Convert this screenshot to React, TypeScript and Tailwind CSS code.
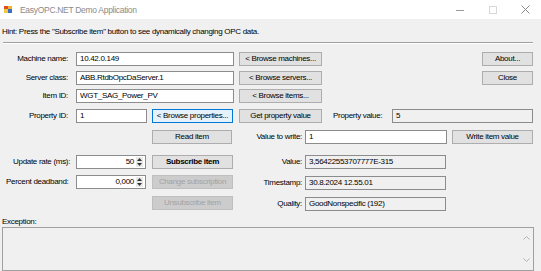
import React from "react";

const F = "font-['Liberation_Sans',Arial,sans-serif] tracking-[-0.3px]";

function Tb({ w, value, ro }: { w: string; value: string; ro?: boolean }) {
  return (
    <div
      className={`${w} h-[14px] shrink-0 border border-[#8c8c8c] ${ro ? "bg-[#f0f0f0]" : "bg-white"} flex items-center pl-[3px] text-[8px] leading-[12px] text-black whitespace-nowrap overflow-hidden`}
    >
      {value}
    </div>
  );
}

function Btn({
  w,
  children,
  bold,
  disabled,
  focused,
}: {
  w: string;
  children: React.ReactNode;
  bold?: boolean;
  disabled?: boolean;
  focused?: boolean;
}) {
  const cls = disabled
    ? "bg-[#cccccc] border-[#bfbfbf] text-[#a3a3a3]"
    : focused
    ? "bg-[#e5f1fb] border-[#0078d7] text-black"
    : "bg-[#e1e1e1] border-[#adadad] text-black";
  return (
    <div
      className={`${w} h-[14px] shrink-0 border ${cls} flex items-center justify-center text-[8px] leading-[12px] whitespace-nowrap ${bold ? "font-bold" : ""}`}
    >
      {children}
    </div>
  );
}

function Lbl({ w, children, right }: { w: string; children: React.ReactNode; right?: boolean }) {
  return (
    <div className={`${w} shrink-0 text-[8px] leading-[12px] text-black whitespace-nowrap ${right ? "text-right" : ""}`}>
      {children}
    </div>
  );
}

function Spin({ value }: { value: string }) {
  return (
    <div className="w-[70px] h-[14px] shrink-0 border border-[#8c8c8c] bg-white flex items-stretch">
      <div className="flex-1 text-right pr-[2px] text-[8px] leading-[12px] text-black">{value}</div>
      <div className="w-[7px] my-[1px] mr-[2px] bg-[#e8e8e8] flex flex-col justify-between items-center py-[1px]">
        <svg width="5" height="3" viewBox="0 0 5 3">
          <path d="M0 3 L2.5 0 L5 3 Z" fill="#333" />
        </svg>
        <svg width="5" height="3" viewBox="0 0 5 3">
          <path d="M0 0 L2.5 3 L5 0 Z" fill="#333" />
        </svg>
      </div>
    </div>
  );
}

export default function App() {
  return (
    <div className={`w-[541px] h-[271px] bg-[#f0f0f0] flex flex-col overflow-hidden ${F}`}>
      {/* Title bar */}
      <div className="h-[19px] bg-white flex items-center shrink-0">
        <svg className="ml-[4px]" width="8" height="7" viewBox="0 0 8 7">
          <rect x="0" y="0" width="4" height="3" fill="#e04a2a" />
          <rect x="4" y="0" width="4" height="3" fill="#f2b233" />
          <rect x="0" y="3" width="4" height="4" fill="#f5c842" />
          <rect x="4" y="3" width="4" height="4" fill="#3b6fc4" />
        </svg>
        <div className="ml-[8px] text-[8.5px] text-[#8a8a8a] leading-[12px]">EasyOPC.NET Demo Application</div>
        <div className="ml-auto flex items-center">
          <svg width="8" height="8" viewBox="0 0 8 8" className="mr-[25px]">
            <line x1="0" y1="4.5" x2="8" y2="4.5" stroke="#9a9a9a" strokeWidth="1" />
          </svg>
          <svg width="8" height="8" viewBox="0 0 8 8" className="mr-[24px]">
            <rect x="0.5" y="0.5" width="7" height="7" fill="none" stroke="#d8d8d8" strokeWidth="1" />
          </svg>
          <svg width="9" height="9" viewBox="0 0 9 9" className="mr-[11px]">
            <path d="M0.5 0.5 L8.5 8.5 M8.5 0.5 L0.5 8.5" stroke="#8a8a8a" strokeWidth="1" />
          </svg>
        </div>
      </div>

      {/* Hint */}
      <div className="mt-[7px] ml-[2px] h-[12px] text-[8px] leading-[12px] text-black whitespace-nowrap">
        Hint: Press the "Subscribe item" button to see dynamically changing OPC data.
      </div>
      <div className="mt-[4px] ml-[3px] w-[530px] h-[2px] border-t border-[#a0a0a0] border-b border-b-white" />

      {/* Row 1 */}
      <div className="mt-[8px] h-[14px] flex items-center">
        <Lbl w="w-[68px]" right>Machine name:</Lbl>
        <div className="ml-[8px]"><Tb w="w-[158px]" value="10.42.0.149" /></div>
        <div className="ml-[5px]"><Btn w="w-[83px]">&lt; Browse machines...</Btn></div>
        <div className="ml-auto mr-[8px]"><Btn w="w-[51px]">About...</Btn></div>
      </div>

      {/* Row 2 */}
      <div className="mt-[5px] h-[14px] flex items-center">
        <Lbl w="w-[68px]" right>Server class:</Lbl>
        <div className="ml-[8px]"><Tb w="w-[158px]" value="ABB.RtdbOpcDaServer.1" /></div>
        <div className="ml-[5px]"><Btn w="w-[83px]">&lt; Browse servers...</Btn></div>
        <div className="ml-auto mr-[8px]"><Btn w="w-[51px]">Close</Btn></div>
      </div>

      {/* Row 3 */}
      <div className="mt-[4px] h-[14px] flex items-center">
        <Lbl w="w-[68px]" right>Item ID:</Lbl>
        <div className="ml-[8px]"><Tb w="w-[158px]" value="WGT_SAG_Power_PV" /></div>
        <div className="ml-[5px]"><Btn w="w-[83px]">&lt; Browse items...</Btn></div>
      </div>

      {/* Row 4 */}
      <div className="mt-[6px] h-[14px] flex items-center">
        <Lbl w="w-[68px]" right>Property ID:</Lbl>
        <div className="ml-[8px]"><Tb w="w-[71px]" value="1" /></div>
        <div className="ml-[5px]"><Btn w="w-[81px]" focused>&lt; Browse properties...</Btn></div>
        <div className="ml-[6px]"><Btn w="w-[83px]">Get property value</Btn></div>
        <div className="ml-[11px]"><Lbl w="w-[56px]">Property value:</Lbl></div>
        <div className="ml-auto mr-[8px]"><Tb w="w-[141px]" value="5" ro /></div>
      </div>

      {/* Row 5 */}
      <div className="mt-[7px] h-[14px] flex items-center">
        <div className="ml-[152px]"><Btn w="w-[80px]">Read item</Btn></div>
        <Lbl w="w-[70px]" right>Value to write:</Lbl>
        <div className="ml-[3px]"><Tb w="w-[142px]" value="1" /></div>
        <div className="ml-auto mr-[8px]"><Btn w="w-[81px]">Write item value</Btn></div>
      </div>

      {/* Rows 6-8 */}
      <div className="mt-[11px] flex">
        <div className="w-[234px] flex flex-col">
          <div className="h-[14px] flex items-center">
            <div className="ml-[13px]"><Lbl w="w-[63px]">Update rate (ms):</Lbl></div>
            <Spin value="50" />
            <div className="ml-[6px]"><Btn w="w-[81px]" bold>Subscribe item</Btn></div>
          </div>
          <div className="mt-[6px] h-[14px] flex items-center">
            <div className="ml-[6px]"><Lbl w="w-[70px]">Percent deadband:</Lbl></div>
            <Spin value="0,000" />
            <div className="ml-[6px]"><Btn w="w-[81px]" disabled>Change subscription</Btn></div>
          </div>
          <div className="mt-[7px] h-[14px] flex items-center">
            <div className="ml-[152px]"><Btn w="w-[81px]" disabled>Unsubscribe item</Btn></div>
          </div>
        </div>
        <div className="flex flex-col">
          <div className="h-[14px] flex items-center">
            <Lbl w="w-[68px]" right>Value:</Lbl>
            <div className="ml-[3px]"><Tb w="w-[141px]" value="3,56422553707777E-315" ro /></div>
          </div>
          <div className="mt-[7px] h-[14px] flex items-center">
            <Lbl w="w-[68px]" right>Timestamp:</Lbl>
            <div className="ml-[3px]"><Tb w="w-[141px]" value="30.8.2024 12.55.01" ro /></div>
          </div>
          <div className="mt-[7px] h-[14px] flex items-center">
            <Lbl w="w-[68px]" right>Quality:</Lbl>
            <div className="ml-[3px]"><Tb w="w-[141px]" value="GoodNonspecific (192)" ro /></div>
          </div>
        </div>
      </div>

      {/* Exception */}
      <div className="mt-[5px] ml-[2px] h-[11px] text-[8px] leading-[11px] text-black">Exception:</div>
      <div className="ml-[2px] w-[532px] h-[44px] border border-[#a0a0a0] bg-[#f0f0f0] flex justify-end">
        <div className="w-[12px] flex flex-col items-center justify-between py-[8px] pr-[2px]">
          <svg width="7" height="4" viewBox="0 0 7 4">
            <path d="M0.5 3.5 L3.5 0.5 L6.5 3.5" fill="none" stroke="#b0b0b0" strokeWidth="1" />
          </svg>
          <svg width="7" height="4" viewBox="0 0 7 4">
            <path d="M0.5 0.5 L3.5 3.5 L6.5 0.5" fill="none" stroke="#b0b0b0" strokeWidth="1" />
          </svg>
        </div>
      </div>
    </div>
  );
}
